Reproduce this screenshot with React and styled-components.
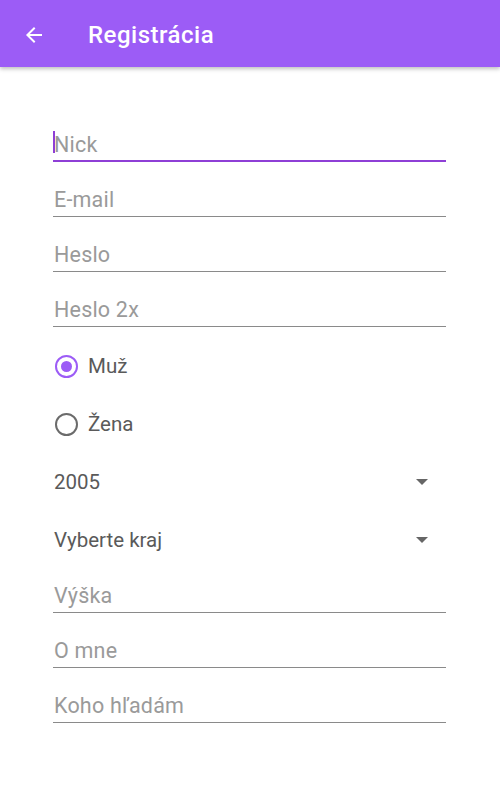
import React from "react";
import styled, { createGlobalStyle } from "styled-components";

const Global = createGlobalStyle`
  html, body { margin: 0; padding: 0; background: #ffffff; }
  body { font-family: Roboto, "Noto Sans", Arial, sans-serif; }
  * { box-sizing: border-box; }
`;

const Page = styled.div`
  width: 500px;
  min-height: 800px;
  background: #fff;
`;

const AppBar = styled.header`
  height: 67px;
  background: #9c5cf6;
  display: flex;
  align-items: center;
  padding-left: 22px;
  padding-top: 3px;
  box-shadow: 0 2px 4px rgba(0, 0, 0, 0.25);
  position: relative;
  z-index: 1;
`;

const BackButton = styled.button`
  width: 24px;
  height: 24px;
  padding: 0;
  border: 0;
  background: none;
  display: flex;
  align-items: center;
  justify-content: center;
  margin-right: 42px;
`;

const Title = styled.h1`
  margin: 0;
  color: #fff;
  font-size: 24px;
  font-weight: 500;
  letter-spacing: 0.5px;
`;

const Form = styled.div`
  padding: 40px 54px 0 53px;
  display: flex;
  flex-direction: column;
`;

const Field = styled.div`
  height: ${(p) => p.$h || 55}px;
  display: flex;
  align-items: flex-end;
  border-bottom: ${(p) => (p.$focused ? "2px solid #8e3fd6" : "1px solid #8a8a8a")};
  padding-bottom: ${(p) => (p.$focused ? 3 : 4)}px;
  padding-left: 1px;
  position: relative;
`;

const Hint = styled.span`
  font-size: 21.5px;
  line-height: 24px;
  letter-spacing: 0.2px;
  color: #9a9a9a;
`;

const Caret = styled.span`
  position: absolute;
  left: 0;
  bottom: 7px;
  width: 2px;
  height: 22px;
  background: #8e3fd6;
`;

const RadioGroup = styled.div`
  margin-top: 10px;
  display: flex;
  flex-direction: column;
`;

const Row = styled.div`
  height: 58px;
  display: flex;
  align-items: center;
`;

const RadioCircle = styled.span`
  width: 23px;
  height: 23px;
  margin-left: 2px;
  border-radius: 50%;
  border: 2px solid ${(p) => (p.$checked ? "#9c5cf6" : "#6b6b6b")};
  display: flex;
  align-items: center;
  justify-content: center;
  margin-right: 10px;
  &::after {
    content: "";
    width: 11px;
    height: 11px;
    border-radius: 50%;
    background: ${(p) => (p.$checked ? "#9c5cf6" : "transparent")};
  }
`;

const Label = styled.span`
  font-size: 20.5px;
  color: #5a5a5a;
  line-height: 24px;
`;

const Spinner = styled(Row)`
  justify-content: space-between;
  padding-left: 1px;
  padding-right: 18px;
`;

const Triangle = styled.span`
  width: 0;
  height: 0;
  border-left: 6px solid transparent;
  border-right: 6px solid transparent;
  border-top: 6px solid #666;
`;

export default function App() {
  return (
    <Page>
      <Global />
      <AppBar>
        <BackButton aria-label="Späť">
          <svg width="24" height="24" viewBox="0 0 24 24" fill="none">
            <path d="M20 11H7.83l5.59-5.59L12 4l-8 8 8 8 1.41-1.41L7.83 13H20v-2z" fill="#fff" />
          </svg>
        </BackButton>
        <Title>Registrácia</Title>
      </AppBar>
      <Form>
        <Field $focused>
          <Caret />
          <Hint>Nick</Hint>
        </Field>
        <Field>
          <Hint>E-mail</Hint>
        </Field>
        <Field>
          <Hint>Heslo</Hint>
        </Field>
        <Field>
          <Hint>Heslo 2x</Hint>
        </Field>
        <RadioGroup>
          <Row>
            <RadioCircle $checked />
            <Label>Muž</Label>
          </Row>
          <Row>
            <RadioCircle />
            <Label>Žena</Label>
          </Row>
          <Spinner>
            <Label>2005</Label>
            <Triangle />
          </Spinner>
          <Spinner>
            <Label>Vyberte kraj</Label>
            <Triangle />
          </Spinner>
        </RadioGroup>
        <Field $h={44}>
          <Hint>Výška</Hint>
        </Field>
        <Field>
          <Hint>O mne</Hint>
        </Field>
        <Field>
          <Hint>Koho hľadám</Hint>
        </Field>
      </Form>
    </Page>
  );
}
